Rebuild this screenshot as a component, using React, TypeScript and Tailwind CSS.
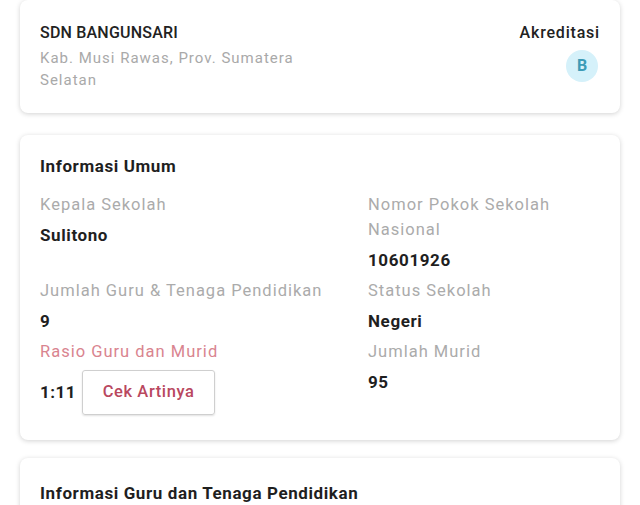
import React from 'react';

const label = 'text-[16.5px] leading-[25px] text-[#ababab] tracking-[1px]';
const value = 'text-[17px] leading-[30px] font-bold text-[#1f1f1f] tracking-[0.6px] mt-[3px]';
const heading = 'text-[17px] leading-[22px] font-bold text-[#1f1f1f] tracking-[0.6px]';

function Card({ children, className = '' }: { children: React.ReactNode; className?: string }) {
  return (
    <div className={`bg-white rounded-lg shadow-[0_1px_5px_rgba(0,0,0,0.18)] ${className}`}>
      {children}
    </div>
  );
}

export default function App() {
  return (
    <div className="w-[640px] h-[505px] overflow-hidden bg-white px-5 font-['Roboto',sans-serif]">
      <div className="flex flex-col">
        {/* School header */}
        <Card className="px-5 pt-[22px] pb-[22px] flex justify-between">
          <div className="w-[270px]">
            <p className="text-[16px] leading-[22px] font-medium text-[#222] tracking-[0.2px]">SDN BANGUNSARI</p>
            <p className="text-[15px] leading-[22px] text-[#a9a9a9] tracking-[1px] mt-[3px]">
              Kab. Musi Rawas, Prov. Sumatera Selatan
            </p>
          </div>
          <div className="flex flex-col items-end">
            <p className="text-[16px] leading-[22px] font-medium text-[#222] tracking-[0.8px]">Akreditasi</p>
            <span className="mt-[6px] mr-[2px] w-8 h-8 rounded-full bg-[#d5f1fa] text-[#3d9bb6] text-[16px] font-bold flex items-center justify-center">
              B
            </span>
          </div>
        </Card>

        {/* Informasi Umum */}
        <Card className="mt-[22px] px-5 pt-5 pb-[25px]">
          <p className={heading}>Informasi Umum</p>
          <div className="grid grid-cols-[328px_1fr] gap-y-[3px] mt-[15px]">
            <div>
              <p className={label}>Kepala Sekolah</p>
              <p className={value}>Sulitono</p>
            </div>
            <div>
              <p className={`${label} w-[220px]`}>Nomor Pokok Sekolah Nasional</p>
              <p className={value}>10601926</p>
            </div>
            <div>
              <p className={label}>Jumlah Guru &amp; Tenaga Pendidikan</p>
              <p className={value}>9</p>
            </div>
            <div>
              <p className={label}>Status Sekolah</p>
              <p className={value}>Negeri</p>
            </div>
            <div>
              <p className="text-[16.5px] leading-[25px] text-[#d9848f] tracking-[1px]">Rasio Guru dan Murid</p>
              <div className="flex items-center gap-[6px] mt-[6px]">
                <span className="text-[17px] font-bold text-[#1f1f1f] tracking-[0.5px]">1:11</span>
                <button className="w-[133px] h-[45px] border border-[#cfcfcf] rounded-[3px] text-[16.5px] font-medium text-[#b9485f] tracking-[0.6px] shadow-[0_1px_2px_rgba(0,0,0,0.12)]">
                  Cek Artinya
                </button>
              </div>
            </div>
            <div>
              <p className={label}>Jumlah Murid</p>
              <p className={value}>95</p>
            </div>
          </div>
        </Card>

        {/* Informasi Guru */}
        <Card className="mt-[18px] px-5 pt-6 pb-6">
          <p className={heading}>Informasi Guru dan Tenaga Pendidikan</p>
          <div className="h-24" />
        </Card>
      </div>
    </div>
  );
}
